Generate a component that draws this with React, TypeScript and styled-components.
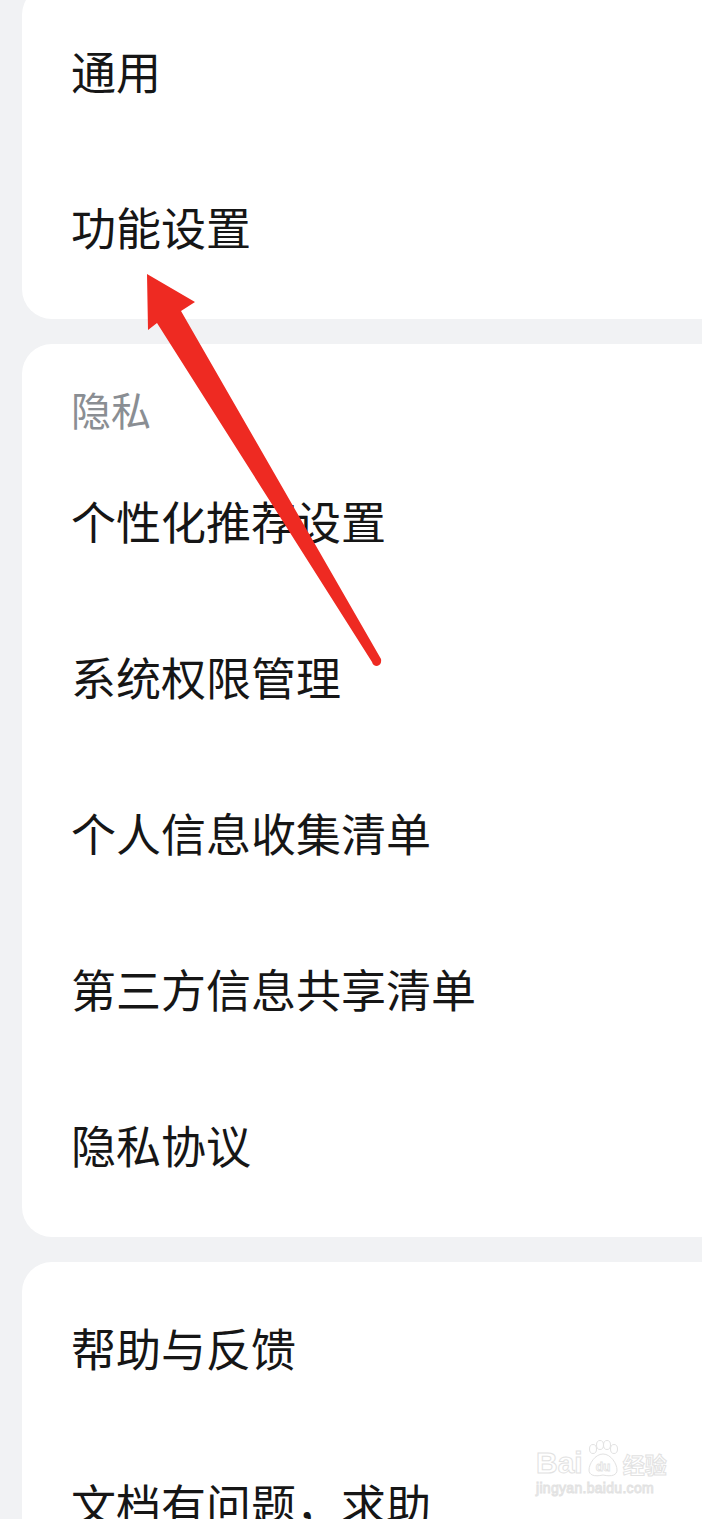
import React from "react";
import styled, { createGlobalStyle } from "styled-components";

const Global = createGlobalStyle`
  html, body { margin: 0; padding: 0; background: #f1f2f4; }
  body { font-family: "Noto Sans CJK SC", "Noto Sans", sans-serif; }
  #root { width: 702px; }
`;

const Page = styled.div`
  position: relative;
  width: 702px;
  height: 1519px;
  overflow: hidden;
  background: #f1f2f4;
`;

const List = styled.div`
  display: flex;
  flex-direction: column;
  gap: 25px;
  margin-top: -15px;
  padding-left: 22px;
`;

const Card = styled.section`
  background: #ffffff;
  border-radius: 30px;
  margin-right: -40px;
  padding: 11px 0;
  display: flex;
  flex-direction: column;
`;

const Header = styled.div`
  height: 102px;
  margin-top: -11px;
  display: flex;
  align-items: center;
  padding: 28px 0 0 49px;
  box-sizing: border-box;
  font-size: 40px;
  color: #8a8e93;
`;

const Row = styled.div`
  height: 156px;
  box-sizing: border-box;
  display: flex;
  align-items: center;
  padding: 0 0 8px 49px;
  font-size: 45px;
  color: #161616;
  white-space: nowrap;
`;

const Overlay = styled.svg`
  position: absolute;
  left: 0;
  top: 0;
  pointer-events: none;
`;

const Watermark = styled.div`
  position: absolute;
  left: 536px;
  top: 1440px;
  display: flex;
  flex-direction: column;
  align-items: flex-start;
  color: #ffffff;
  -webkit-text-stroke: 1px #e2e2e2;
  font-family: "Liberation Sans", Arial, sans-serif;
  pointer-events: none;
`;

const WmTop = styled.div`
  display: flex;
  align-items: flex-end;
  gap: 2px;
  font-size: 30px;
  font-weight: 700;
  line-height: 1;
`;

const WmCn = styled.span`
  font-family: "Noto Sans CJK SC", sans-serif;
  font-size: 22px;
  font-weight: 700;
  margin-bottom: 4px;
`;

const WmUrl = styled.div`
  font-size: 14px;
  line-height: 1;
  margin-top: 3px;
  letter-spacing: 0.3px;
`;

const cards: { header?: string; rows: string[] }[] = [
  { rows: ["通用", "功能设置"] },
  {
    header: "隐私",
    rows: ["个性化推荐设置", "系统权限管理", "个人信息收集清单", "第三方信息共享清单", "隐私协议"],
  },
  { rows: ["帮助与反馈", "文档有问题，求助"] },
];

const Paw = () => (
  <svg width="36" height="38" viewBox="0 0 36 38">
    <g fill="#fff" stroke="#e2e2e2" strokeWidth="1">
      <ellipse cx="8" cy="9" rx="3.5" ry="4.5" />
      <ellipse cx="15" cy="5" rx="3.5" ry="4.5" />
      <ellipse cx="22" cy="5" rx="3.5" ry="4.5" />
      <ellipse cx="29" cy="9" rx="3.5" ry="4.5" />
      <path d="M18 14 C10 14 4 24 4 30 C4 35 9 37 18 35 C27 37 32 35 32 30 C32 24 26 14 18 14 Z" />
    </g>
    <text x="18" y="31" textAnchor="middle" fontSize="12" fontWeight="700" fill="#fff" stroke="#e2e2e2" strokeWidth="0.8" fontFamily="Liberation Sans, sans-serif">du</text>
  </svg>
);

export default function App() {
  return (
    <Page>
      <Global />
      <List>
        {cards.map((c, i) => (
          <Card key={i}>
            {c.header && <Header>{c.header}</Header>}
            {c.rows.map((r) => (
              <Row key={r}>{r}</Row>
            ))}
          </Card>
        ))}
      </List>
      <Overlay width="702" height="1519" viewBox="0 0 702 1519">
        <path
          d="M147 274 L195 302 L181 311 L381 659 Q382 665 377 666 Q373 666 372 662 L157 323 L148 330 Z"
          fill="#ee2a22"
        />
      </Overlay>
      <Watermark>
        <WmTop>
          <span>Bai</span>
          <Paw />
          <WmCn>经验</WmCn>
        </WmTop>
        <WmUrl>jingyan.baidu.com</WmUrl>
      </Watermark>
    </Page>
  );
}
